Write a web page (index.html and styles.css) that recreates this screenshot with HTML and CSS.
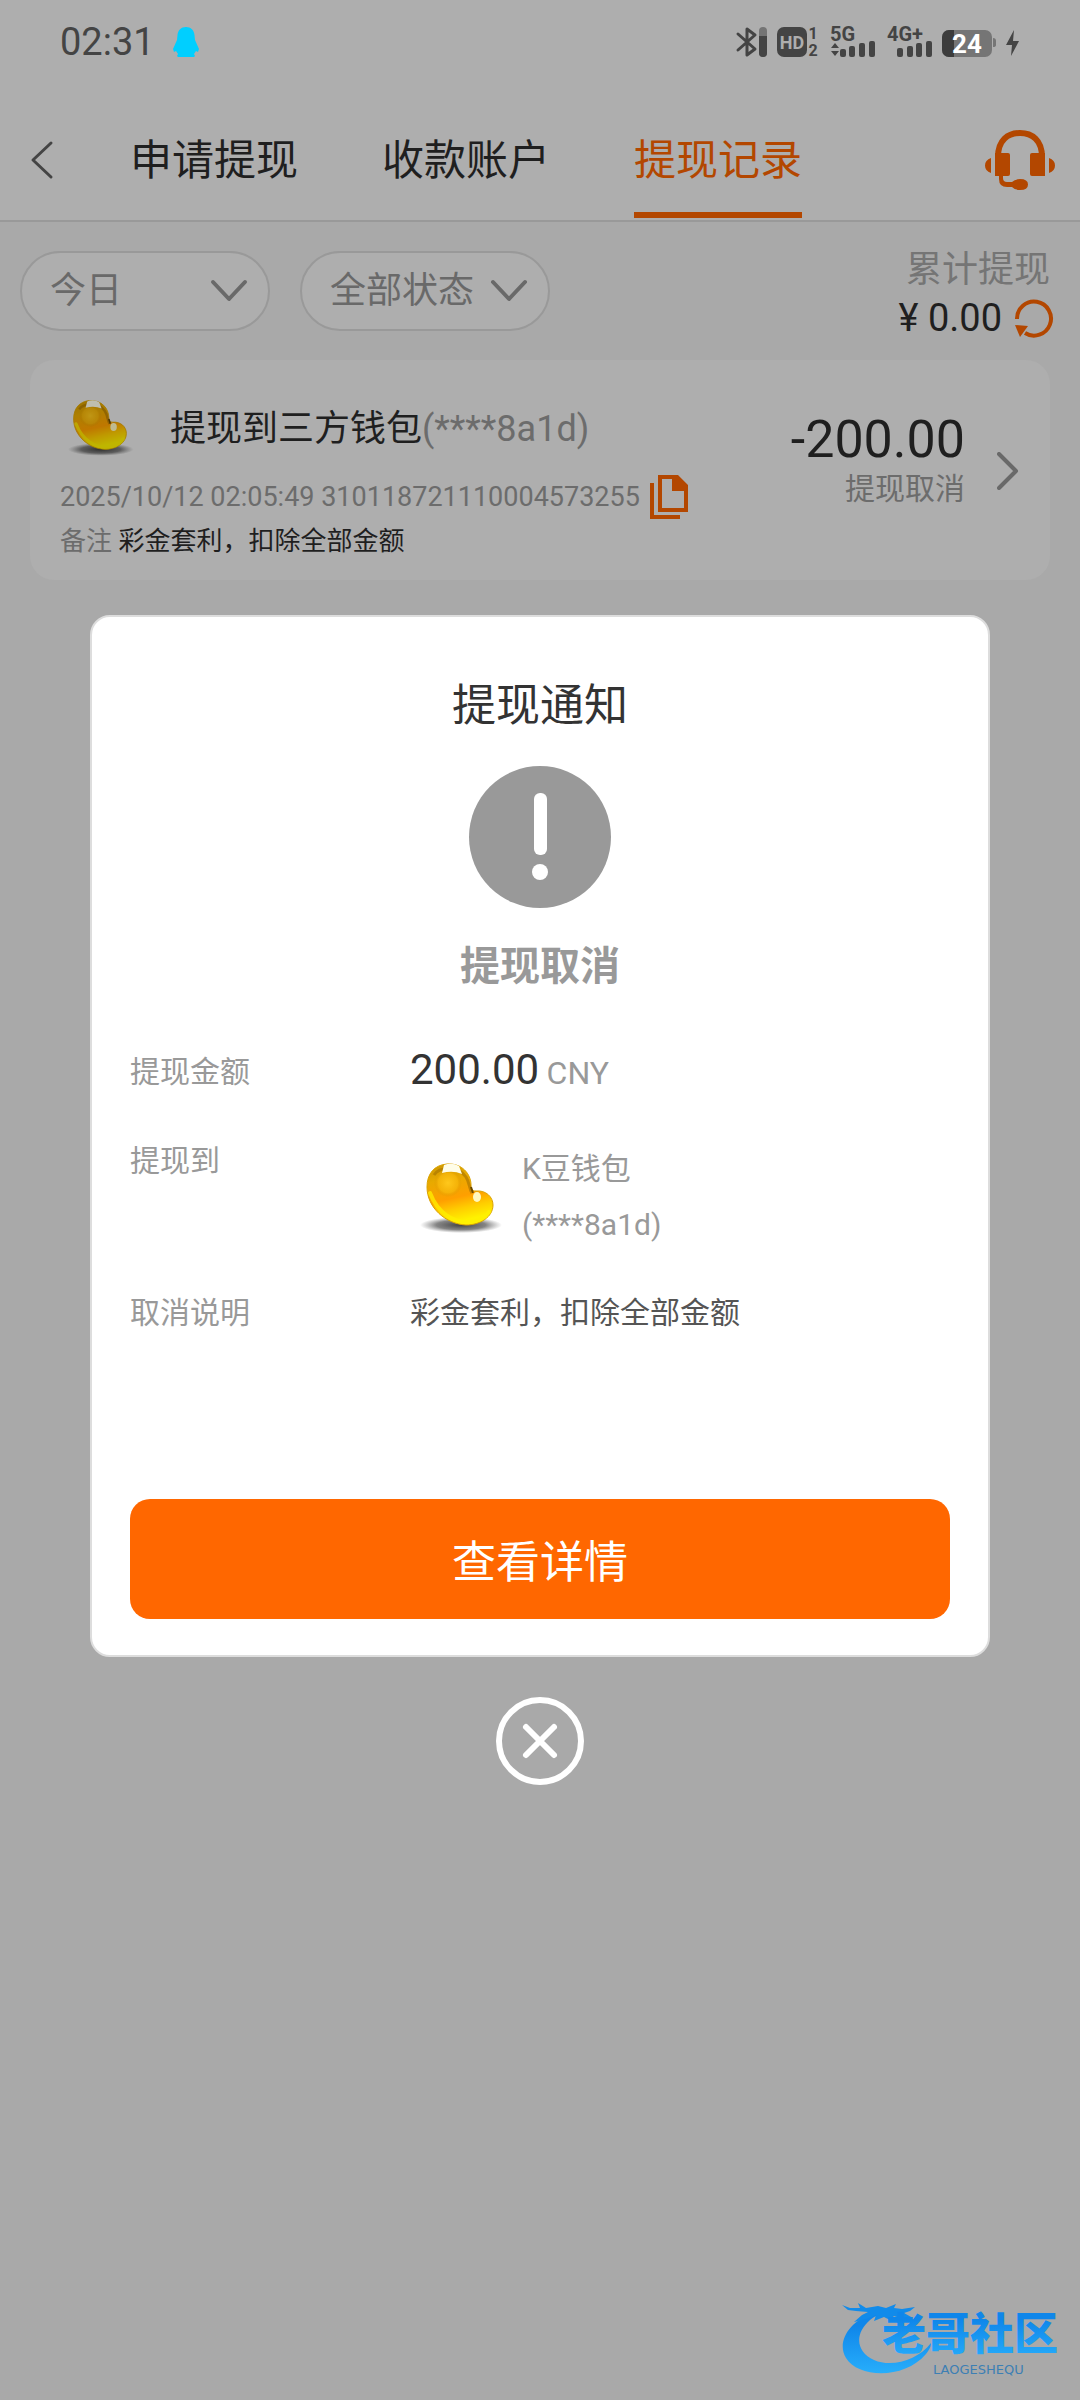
FILE: index.html
```html
<!DOCTYPE html>
<html lang="zh-CN">
<head>
<meta charset="utf-8">
<meta name="viewport" content="width=device-width">
<title>提现记录</title>
<link rel="stylesheet" href="styles.css">
</head>
<body>
<svg class="defs" aria-hidden="true">
  <defs>
    <linearGradient id="gold" x1="0" y1="0" x2="0.25" y2="1">
      <stop offset="0" stop-color="#c99500"/>
      <stop offset="0.3" stop-color="#e8aa00"/>
      <stop offset="0.62" stop-color="#ff9f00"/>
      <stop offset="0.8" stop-color="#ffcc00"/>
      <stop offset="1" stop-color="#fff200"/>
    </linearGradient>
    <radialGradient id="glow">
      <stop offset="0" stop-color="#ffc81c"/>
      <stop offset="0.7" stop-color="#f6b60a" stop-opacity="0.8"/>
      <stop offset="1" stop-color="#d89200" stop-opacity="0"/>
    </radialGradient>
    <radialGradient id="shade">
      <stop offset="0" stop-color="#222" stop-opacity="0.85"/>
      <stop offset="0.6" stop-color="#333" stop-opacity="0.6"/>
      <stop offset="1" stop-color="#555" stop-opacity="0"/>
    </radialGradient>
    <linearGradient id="brand" x1="0" y1="0" x2="0" y2="1">
      <stop offset="0.2" stop-color="#0f86ea"/>
      <stop offset="1" stop-color="#27aefb"/>
    </linearGradient>
    <symbol id="bean" viewBox="0 0 100 100">
      <ellipse cx="51" cy="78" rx="41" ry="8" fill="url(#shade)"/>
      <path d="M37 17C52 16 61 27 61 38C61 42 62 44 66 44C76 43 83 50 83 58C83 70 70 78 56 78C36 77 17 61 17 40C17 27 24 18 37 17Z" fill="url(#gold)" stroke="#dba300" stroke-width="1"/>
      <path d="M20 46C28 67 44 75 57 75C67 75 75 71 79 65" fill="none" stroke="#fff000" stroke-width="4" stroke-linecap="round" opacity="0.75"/>
      <path d="M24 28C29 20 48 18 56 30C60 36 59 42 62 46" fill="none" stroke="#a97500" stroke-width="3" opacity="0.65"/>
      <circle cx="38" cy="36" r="14" fill="url(#glow)"/>
      <path d="M34 18Q42 15 49 19L52 27Q43 23 32 26Z" fill="#fffde8"/>
      <ellipse cx="67" cy="50" rx="4" ry="5" fill="#fff8c0"/>
      <path d="M61 40L63 46" stroke="#6b4a00" stroke-width="2"/>
    </symbol>
  </defs>
</svg>

<header class="top">
  <div class="status">
    <div class="status-left">
      <span class="clock">02:31</span>
      <svg class="qq" viewBox="0 0 26 30" role="img" aria-label="QQ"><path d="M13 0C18 0 21 3 21.500 8L22 13L26 22L25 25L23 24L21 27L22 29L21 30H5L4 29L5 27L3 24L1 25L0 22L4 13L4.500 8C5 3 8 0 13 0Z" fill="#00cfff"/></svg>
    </div>
    <svg class="status-icons" viewBox="730 22 300 40" role="img" aria-label="蓝牙、信号、电量">
      <path d="M738 34L755 49L747 55V29L755 35L738 50" fill="none" stroke="#444" stroke-width="3" stroke-linecap="round" stroke-linejoin="round"/>
      <rect x="759" y="27" width="8" height="30" rx="4" fill="#747474"/>
      <path d="M759 36H767V53A4 4 0 0 1 759 53Z" fill="#444"/>
      <rect x="777" y="27" width="30" height="30" rx="7" fill="#444"/>
      <text x="792" y="49" class="s-hd">HD</text>
      <text x="813" y="39" class="s-mini">1</text>
      <text x="813" y="56" class="s-mini">2</text>
      <text x="830" y="41" class="s-net">5G</text>
      <path d="M831 48L835 43L839 48ZM831 51H839L835 56Z" fill="#444"/>
      <g fill="#444">
        <rect x="840" y="49" width="6" height="8" rx="2"/><rect x="849" y="46" width="6" height="11" rx="2"/><rect x="859" y="43" width="6" height="14" rx="2"/><rect x="869" y="41" width="6" height="16" rx="2"/>
        <rect x="897" y="48" width="6" height="9" rx="2"/><rect x="907" y="46" width="6" height="11" rx="2"/><rect x="916" y="43" width="6" height="14" rx="2"/><rect x="926" y="41" width="6" height="16" rx="2"/>
      </g>
      <text x="887" y="41" class="s-net">4G+</text>
      <rect x="942" y="30" width="50" height="27" rx="7" fill="#757575"/>
      <path d="M993 38Q996 38 996 41V45Q996 47 993 47Z" fill="#757575"/>
      <path d="M954 30V57H949A7 7 0 0 1 942 50V37A7 7 0 0 1 949 30Z" fill="#3c3c3c"/>
      <text x="967" y="53" class="s-bat">24</text>
      <path d="M1014 30L1006 45H1012L1011 56L1019 41H1013Z" fill="#444"/>
    </svg>
  </div>
  <nav class="nav">
    <button class="icon-btn back" aria-label="返回"><svg width="24" height="40" viewBox="0 0 24 40"><path d="M21 3L3 20L21 37" fill="none" stroke="#444" stroke-width="3" stroke-linecap="round" stroke-linejoin="round"/></svg></button>
    <div class="tabs">
      <a class="tab" href="#apply">申请提现</a>
      <a class="tab" href="#account">收款账户</a>
      <a class="tab active" href="#records" aria-current="page">提现记录</a>
    </div>
    <button class="icon-btn service" aria-label="客服"><svg width="70" height="60" viewBox="0 0 70 60" fill="#b34700"><path d="M13 27C13 10 23 3 35 3S57 10 57 27" fill="none" stroke="#b34700" stroke-width="6"/><path d="M10 23H23Q25 23 25 25V44Q25 46 23 46H18V48Q18 52 22 52H27Q30 49 35 49Q43 49 43 54.500Q43 60 35 60Q30 60 27 57H22Q14 57 14 49V46H10ZM60 23H47Q45 23 45 25V44Q45 46 47 46H60ZM6 28Q0 30 0 35.500Q0 41 6 43ZM64 28Q70 30 70 35.500Q70 41 64 43Z"/></svg></button>
  </nav>
</header>

<main>
  <section class="filters">
    <div class="select-wrap">
      <select class="select" aria-label="日期"><option>今日</option></select>
      <svg class="caret" viewBox="0 0 38 24"><path d="M3 3L19 20L35 3" fill="none" stroke="#696969" stroke-width="4" stroke-linecap="round" stroke-linejoin="round"/></svg>
    </div>
    <div class="select-wrap">
      <select class="select" aria-label="状态"><option>全部状态</option></select>
      <svg class="caret" viewBox="0 0 38 24"><path d="M3 3L19 20L35 3" fill="none" stroke="#696969" stroke-width="4" stroke-linecap="round" stroke-linejoin="round"/></svg>
    </div>
    <div class="total">
      <span class="total-label">累计提现</span>
      <span class="total-value">¥ 0.00
        <button class="icon-btn" aria-label="刷新"><svg width="40" height="40" viewBox="0 0 40 40"><path d="M3 21A17 17 0 1 1 11 35" fill="none" stroke="#b34700" stroke-width="4"/><path d="M1 27L14 28L6 39Z" fill="#b34700"/></svg></button>
      </span>
    </div>
  </section>

  <article class="record">
    <div class="record-main">
      <div class="record-title">
        <svg class="bean-sm" role="img" aria-label="K豆"><use href="#bean"/></svg>
        <h2 class="record-name">提现到三方钱包<span class="muted">(****8a1d)</span></h2>
      </div>
      <div class="record-meta">
        <span>2025/10/12 02:05:49 310118721110004573255</span>
        <button class="icon-btn" aria-label="复制"><svg width="38" height="44" viewBox="0 0 38 44"><path d="M2 8V42H30" fill="none" stroke="#b34700" stroke-width="4"/><path fill-rule="evenodd" fill="#b34700" d="M8 0H28L38 10V37H8ZM12 4V33H34V16H22V4Z"/></svg></button>
      </div>
      <p class="record-note"><span class="muted">备注</span> 彩金套利，扣除全部金额</p>
    </div>
    <div class="record-side">
      <span class="amount">-200.00</span>
      <span class="state">提现取消</span>
    </div>
    <svg class="arrow" viewBox="0 0 22 38"><path d="M2 2L19 19L2 36" fill="none" stroke="#696969" stroke-width="4" stroke-linecap="round" stroke-linejoin="round"/></svg>
  </article>
</main>

<div class="overlay">
  <div class="modal" role="dialog" aria-modal="true" aria-labelledby="modal-title">
    <h1 class="modal-title" id="modal-title">提现通知</h1>
    <svg class="alert" viewBox="0 0 142 142" aria-hidden="true"><circle cx="71" cy="71" r="71" fill="#999"/><rect x="65" y="27" width="13" height="62" rx="6" fill="#fff"/><circle cx="71" cy="106" r="8" fill="#fff"/></svg>
    <p class="modal-state">提现取消</p>
    <dl class="details">
      <div class="row row-center">
        <dt>提现金额</dt>
        <dd><span class="sum">200.00</span> <span class="currency">CNY</span></dd>
      </div>
      <div class="row">
        <dt>提现到</dt>
        <dd class="wallet">
          <svg class="bean-lg" role="img" aria-label="K豆"><use href="#bean"/></svg>
          <div class="wallet-text"><span>K豆钱包</span><span>(****8a1d)</span></div>
        </dd>
      </div>
      <div class="row">
        <dt>取消说明</dt>
        <dd class="reason">彩金套利，扣除全部金额</dd>
      </div>
    </dl>
    <button class="primary">查看详情</button>
  </div>
  <button class="icon-btn close" aria-label="关闭"><svg width="88" height="88" viewBox="0 0 88 88" fill="none" stroke="#fff"><circle cx="44" cy="44" r="41" stroke-width="6"/><path d="M30 30L58 58M58 30L30 58" stroke-width="6" stroke-linecap="round"/></svg></button>
</div>

<svg class="watermark" viewBox="0 0 230 80" role="img" aria-label="老哥社区">
  <path d="M33 14C10 20-4 42 6 58C18 78 64 80 86 54C90 49 91 46 91 43C78 60 52 68 34 60C16 52 14 34 30 20Q36 15 42 14Z" fill="url(#brand)"/>
  <path d="M2 5L10 8L20 8L18 3L26 8L38 6L46 8L56 4L54 8L62 9L75 7L70 11L64 13L73 18L62 19L54 16L50 20L44 17L34 21L36 15L26 19L14 22L22 15L28 12L16 11L8 10Z" fill="#118bea"/>
  <text x="42" y="50" class="brand-name" fill="url(#brand)">老哥社区</text>
  <text x="93" y="74" class="brand-sub">LAOGESHEQU</text>
</svg>
</body>
</html>
```
FILE: styles.css
```css
* {
  box-sizing: border-box;
}

body {
  position: relative;
  margin: 0;
  min-height: 100vh;
  background: #a9a9a9;
  color: #1f1f1f;
  font-family: Roboto, "Noto Sans CJK SC", sans-serif;
}

h1, h2, p, dl, dd {
  margin: 0;
  font-weight: 400;
}

button, select {
  font-family: inherit;
}

.defs {
  position: absolute;
  width: 0;
  height: 0;
}

.icon-btn {
  display: flex;
  padding: 0;
  border: 0;
  background: none;
}

.muted {
  color: #6c6c6c;
}

/* Header */
.top {
  background: #aeaeae;
  border-bottom: 2px solid #999;
}

.status {
  display: flex;
  justify-content: space-between;
  align-items: center;
  height: 84px;
  padding: 0 50px 0 60px;
}

.status-left {
  display: flex;
  align-items: center;
  gap: 18px;
}

.clock {
  color: #444;
  font-size: 38px;
}

.qq {
  width: 26px;
  height: 30px;
}

.status-icons {
  width: 300px;
  height: 40px;
  fill: #444;
  font-weight: 700;
}

.s-hd {
  fill: #aeaeae;
  font-size: 18px;
  text-anchor: middle;
}

.s-mini {
  font-size: 16px;
  text-anchor: middle;
}

.s-net {
  font-size: 20px;
}

.s-bat {
  fill: #fff;
  font-size: 26px;
  text-anchor: middle;
}

.nav {
  display: flex;
  align-items: center;
  height: 120px;
  margin-top: 16px;
  padding: 0 25px 0 30px;
}

.tabs {
  display: flex;
  align-self: stretch;
  gap: 84px;
  margin-left: 76px;
}

.tab {
  position: relative;
  padding-top: 2px;
  color: #1f1f1f;
  font-size: 42px;
  line-height: 118px;
  text-decoration: none;
}

.tab.active {
  color: #b34700;
}

.tab.active::after {
  content: "";
  position: absolute;
  right: 0;
  bottom: 2px;
  left: 0;
  height: 6px;
  background: #b34700;
}

.service {
  margin-left: auto;
}

/* Filters */
.filters {
  display: flex;
  align-items: center;
  gap: 30px;
  padding: 18px 26px 18px 20px;
}

.select-wrap {
  position: relative;
  width: 250px;
}

.select {
  width: 100%;
  height: 80px;
  padding: 0 60px 0 28px;
  border: 2px solid #999;
  border-radius: 40px;
  appearance: none;
  background: #aeaeae;
  color: #696969;
  font-size: 36px;
}

.caret {
  position: absolute;
  top: 28px;
  right: 22px;
  width: 38px;
  height: 24px;
  pointer-events: none;
}

.total {
  display: flex;
  flex-direction: column;
  align-items: flex-end;
  margin-left: auto;
  padding-top: 6px;
  line-height: 48px;
}

.total-label {
  padding-right: 4px;
  color: #757575;
  font-size: 36px;
}

.total-value {
  display: flex;
  align-items: center;
  gap: 12px;
  font-size: 38px;
}

/* Record card */
.record {
  display: flex;
  align-items: center;
  margin: 0 30px;
  padding: 27px 31px 17px 30px;
  border-radius: 24px;
  background: #aeaeae;
}

.record-title {
  display: flex;
  align-items: center;
  gap: 30px;
}

.bean-sm {
  width: 80px;
  height: 80px;
  filter: brightness(0.75);
}

.record-name {
  padding-top: 4px;
  font-size: 36px;
  line-height: 48px;
}

.record-meta {
  display: flex;
  align-items: center;
  gap: 10px;
  margin-top: 8px;
  color: #6c6c6c;
  font-size: 27px;
  line-height: 44px;
}

.record-note {
  font-size: 26px;
  line-height: 44px;
}

.record-side {
  display: flex;
  flex-direction: column;
  align-items: flex-end;
  margin-left: auto;
  padding-bottom: 26px;
}

.amount {
  font-size: 52px;
  line-height: 54px;
}

.state {
  color: #6c6c6c;
  font-size: 30px;
  line-height: 44px;
}

.arrow {
  width: 22px;
  height: 38px;
  margin: 0 0 8px 32px;
}

/* Notice */
.overlay {
  position: absolute;
  inset: 0;
  display: flex;
  flex-direction: column;
  align-items: center;
  justify-content: center;
  gap: 40px;
  padding: 0 90px;
}

.modal {
  display: flex;
  flex-direction: column;
  width: 100%;
  padding: 57px 38px 36px;
  border: 2px solid #ddd;
  border-radius: 20px;
  background: #fff;
}

.modal-title {
  color: #333;
  font-size: 44px;
  line-height: 64px;
  text-align: center;
}

.alert {
  align-self: center;
  width: 142px;
  height: 142px;
  margin: 28px 0 30px;
}

.modal-state {
  color: #999;
  font-size: 40px;
  font-weight: 700;
  line-height: 58px;
  text-align: center;
}

.details {
  display: flex;
  flex-direction: column;
  gap: 40px;
  margin: 47px 0 166px;
  color: #999;
  font-size: 30px;
  line-height: 40px;
}

.row {
  display: grid;
  grid-template-columns: 280px 1fr;
}

.row-center {
  align-items: center;
  line-height: 54px;
}

.sum {
  color: #333;
  font-size: 42px;
}

.currency {
  font-size: 32px;
}

.wallet {
  display: flex;
  align-items: center;
  gap: 12px;
}

.bean-lg {
  width: 100px;
  height: 100px;
}

.wallet-text {
  display: flex;
  flex-direction: column;
  line-height: 56px;
}

.reason {
  color: #555;
}

.primary {
  height: 120px;
  padding: 0;
  border: 0;
  border-radius: 20px;
  background: #ff6700;
  color: #fff;
  font-size: 44px;
}

/* Community mark */
.watermark {
  position: absolute;
  right: 10px;
  bottom: 20px;
  width: 230px;
  height: 80px;
}

.brand-name {
  font-size: 44px;
  font-weight: 900;
}

.brand-sub {
  fill: #3d7fb4;
  font-family: "DejaVu Sans", sans-serif;
  font-size: 13px;
}
```
